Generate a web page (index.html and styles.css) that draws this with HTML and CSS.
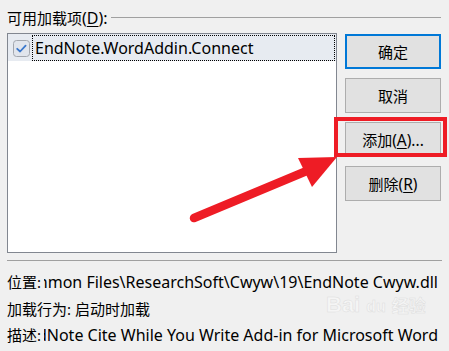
FILE: index.html
```html
<!DOCTYPE html>
<html lang="zh-CN">
<head>
<meta charset="utf-8">
<title>COM 加载项</title>
<link rel="stylesheet" href="styles.css">
</head>
<body>
<div class="dialog">
  <div class="group-head">
    <span class="group-label">可用加载项<span class="lat">(<u>D</u>):</span></span>
    <span class="rule"></span>
  </div>
  <div class="main">
    <div class="list">
      <div class="row selected">
        <span class="check">
          <svg width="17" height="17" viewBox="0 0 17 17">
            <rect x="0.5" y="0.5" width="16" height="16" rx="3" ry="3" fill="#e1e5ec" stroke="#a3a7ae"/>
            <path d="M4.2 8.8 L7.1 11.5 L12.6 5.6" fill="none" stroke="#3b78cc" stroke-width="1.8" stroke-linecap="round" stroke-linejoin="round"/>
          </svg>
        </span>
        <span class="item lat">EndNote.WordAddin.Connect</span>
      </div>
    </div>
    <div class="buttons">
      <button class="btn default">确定</button>
      <button class="btn">取消</button>
      <button class="btn">添加<span class="lat">(<u>A</u>)...</span></button>
      <button class="btn">删除<span class="lat">(<u>R</u>)</span></button>
    </div>
  </div>
  <div class="sep"></div>
  <div class="info">
    <div class="info-row"><span class="k">位置:</span><span class="v lat"><span>C:\Program Files (x86)\Common Files\ResearchSoft\Cwyw\19\EndNote Cwyw.dll</span></span></div>
    <div class="info-row"><span class="k">加载行为:</span><span class="v2">启动时加载</span></div>
    <div class="info-row"><span class="k">描述:</span><span class="v lat"><span>EndNote Cite While You Write Add-in for Microsoft Word</span></span></div>
  </div>

  <div class="watermark"><span class="wm-latin">Bai</span><span class="wm-du">du</span><span class="wm-cjk">经验</span></div>
  <div class="highlight"></div>
  <svg class="arrow" width="449" height="351" viewBox="0 0 449 351">
    <line x1="194" y1="218" x2="309" y2="170" stroke="#ee1c25" stroke-width="8.5" stroke-linecap="round"/>
    <polygon points="298,158 337,157 312,187" fill="#ee1c25"/>
  </svg>
</div>
</body>
</html>
```
FILE: styles.css
```css
* { box-sizing: border-box; }
html, body { margin: 0; padding: 0; }
body {
  background: #f0f0f0;
  width: 449px;
  height: 351px;
  overflow: hidden;
  font-family: "Noto Sans", "Noto Sans CJK SC", sans-serif;
  font-size: 15px;
  color: #000;
}
.dialog {
  position: relative;
  width: 449px;
  height: 351px;
  padding: 8px 7px 0 7px;
}
.lat { font-size: 16px; }
u { text-decoration: underline; text-underline-offset: 2px; }

.group-head {
  display: flex;
  align-items: center;
  height: 20px;
  line-height: 20px;
}
.group-label { white-space: nowrap; }
.rule {
  flex: 1;
  height: 1px;
  background: #a0a0a0;
  margin-left: 3px;
  margin-right: 1px;
  margin-top: -1px;
}

.main {
  display: flex;
  gap: 8px;
  margin-top: 5px;
}
.list {
  width: 330px;
  height: 220px;
  border: 1px solid #828790;
  background: #fff;
}
.row {
  display: flex;
  align-items: center;
  height: 27px;
  padding-left: 5px;
  padding-right: 1px;
}
.row.selected { background: #e7ebf1; }
.check { display: flex; width: 17px; height: 17px; margin-top: 1px; }
.item {
  flex: 1;
  margin-left: 2px;
  height: 26px;
  line-height: 24px;
  padding-left: 2px;
  border: 1px dotted #000;
  white-space: nowrap;
}

.buttons {
  display: flex;
  flex-direction: column;
  gap: 9px;
  padding-top: 1px;
}
.btn {
  width: 96px;
  height: 35px;
  background: #e1e1e1;
  border: 1px solid #adadad;
  font-family: "Noto Sans", "Noto Sans CJK SC", sans-serif;
  font-size: 15px;
  line-height: 20px;
  color: #000;
  padding: 0;
  margin: 0;
}
.btn .lat { font-size: 15.5px; }
.btn.default { border: 2px solid #0078d7; }

.sep {
  height: 1px;
  background: #a0a0a0;
  margin-top: 7px;
}

.info { padding-top: 8px; }
.info-row {
  display: flex;
  height: 26.5px;
  line-height: 26px;
  white-space: nowrap;
}
.k { flex: none; }
.v {
  flex: 1;
  display: flex;
  justify-content: flex-end;
  overflow: hidden;
  margin-left: 3px;
  margin-right: 4px;
}
.v > span { flex: none; }
.v2 { margin-left: 4px; }

.highlight {
  position: absolute;
  left: 334px;
  top: 117px;
  width: 113px;
  height: 40px;
  border: 4px solid #ee1c25;
}
.arrow {
  position: absolute;
  left: 0;
  top: 0;
}
.watermark {
  position: absolute;
  left: 326px;
  top: 292px;
  font-family: "Liberation Sans", sans-serif;
  font-size: 22px;
  font-weight: bold;
  color: #f5f5f5;
  -webkit-text-stroke: 0.5px #dedede;
  display: flex;
  align-items: baseline;
  gap: 6px;
}
.wm-du { font-size: 16px; }
.wm-cjk { font-family: "Noto Sans CJK SC", sans-serif; font-size: 17px; }
```
